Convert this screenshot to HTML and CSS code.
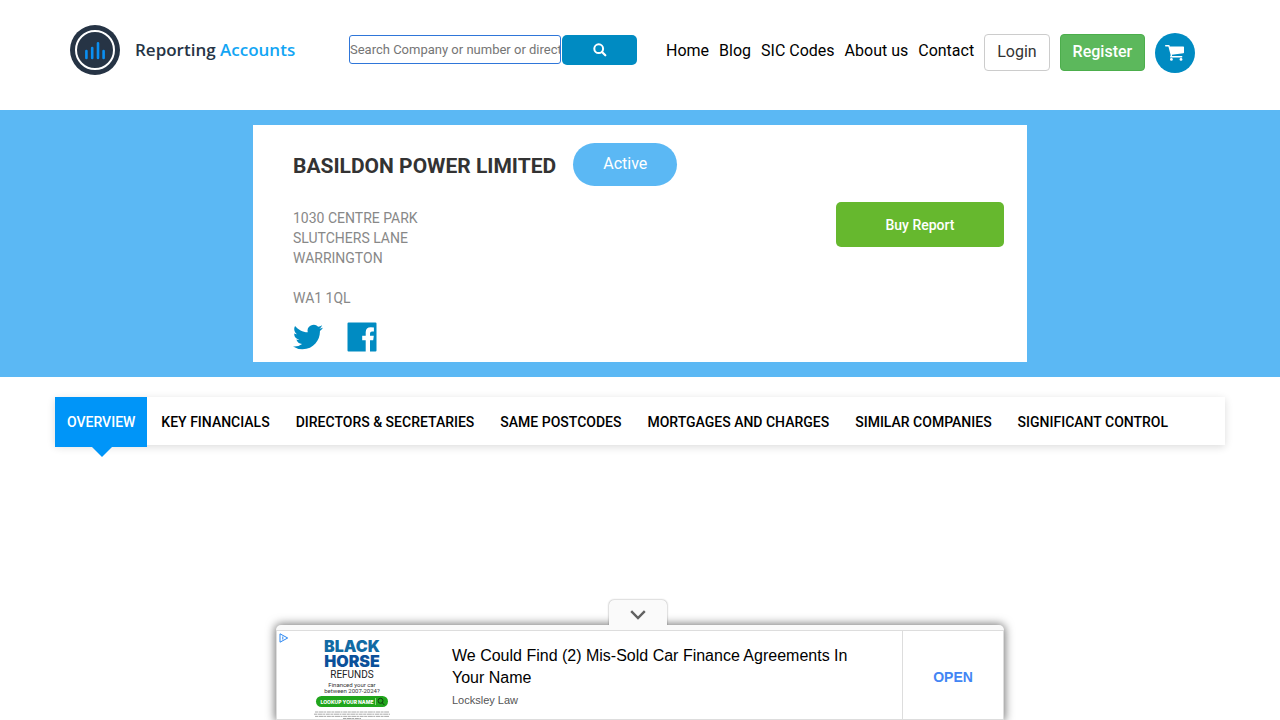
FILE: index.html
```html
<!DOCTYPE html>
<html lang="en">
<head>
  <meta charset="UTF-8">
  <meta name="viewport" content="width=device-width, initial-scale=1.0">
  <title>BASILDON POWER LIMITED - Reporting Accounts</title>
  <link rel="stylesheet" href="styles.css">
</head>
<body>
  <!-- header -->
  <header class="container header">
    <a class="logo" href="#">
      <svg width="50" height="50" viewBox="0 0 50 50" aria-hidden="true">
        <circle cx="25" cy="25" r="25" fill="#263445"/>
        <circle cx="25" cy="25" r="19" fill="none" stroke="#fff" stroke-width="2"/>
        <g stroke="#0a8ff2" stroke-width="2.6" stroke-linecap="round">
          <path d="M16.4 26v7M22.2 23v10M28 18.300v14.700M33.600 26v7"/>
        </g>
      </svg>
      <span class="logo-text">Reporting <span class="logo-blue">Accounts</span></span>
    </a>

    <form class="search" action="#">
      <input type="text" class="search-input" aria-label="Search" placeholder="Search Company or number or director">
      <button type="submit" class="search-btn" aria-label="Search">
        <svg width="14" height="14" viewBox="0 0 14 14" fill="none" stroke="#fff" aria-hidden="true">
          <circle cx="5.700" cy="5.700" r="4.400" stroke-width="2"/>
          <path d="M9 9l3.300 3.300" stroke-width="2.200" stroke-linecap="round"/>
        </svg>
      </button>
    </form>

    <nav class="menu">
      <a href="#" class="menu-link">Home</a>
      <a href="#" class="menu-link">Blog</a>
      <a href="#" class="menu-link">SIC Codes</a>
      <a href="#" class="menu-link">About us</a>
      <a href="#" class="menu-link">Contact</a>
      <a href="#" class="btn btn-login">Login</a>
      <a href="#" class="btn btn-register">Register</a>
      <a href="#" class="cart" aria-label="Cart">
        <svg width="20" height="18" viewBox="0 0 20 18" fill="#fff" aria-hidden="true">
          <path d="M.7 1h3.300q.6 0 .8 1.400H18.300q.7 0 .7.700v5.500q0 .6-.7.700L6.900 10.700q.3.700 0 1.400h9.800q.7 0 .7.700t-.7.700H5.700q-1-.1-.6-1.100l.6-1.200L3.400 2.400H.7Q0 2.300 0 1.700T.7 1z"/>
          <circle cx="6.400" cy="15.400" r="1.400"/>
          <circle cx="16" cy="15.400" r="1.400"/>
        </svg>
      </a>
    </nav>
  </header>

  <!-- company -->
  <section class="banner">
    <div class="company">
      <div class="company-head">
        <h1>BASILDON POWER LIMITED</h1>
        <span class="status">Active</span>
      </div>
      <div class="company-body">
        <address>
          1030 CENTRE PARK<br>
          SLUTCHERS LANE<br>
          WARRINGTON<br><br>
          WA1 1QL
        </address>
        <button type="button" class="buy">Buy Report</button>
      </div>
      <div class="social">
        <a href="#" aria-label="Twitter">
          <svg width="30" height="30" viewBox="0 0 24 24" fill="#008bc2" aria-hidden="true">
            <path d="M23.950 4.570a10 10 0 0 1-2.820.775 4.960 4.960 0 0 0 2.160-2.723c-.950.555-2.005.959-3.127 1.184a4.920 4.920 0 0 0-8.384 4.482C7.690 8.095 4.067 6.130 1.640 3.162a4.820 4.820 0 0 0-.666 2.475c0 1.710.870 3.213 2.188 4.096a4.900 4.900 0 0 1-2.228-.616v.060a4.920 4.920 0 0 0 3.946 4.827 5 5 0 0 1-2.212.085 4.940 4.940 0 0 0 4.604 3.417 9.870 9.870 0 0 1-6.102 2.105c-.390 0-.779-.023-1.170-.067a14 14 0 0 0 7.557 2.209c9.053 0 13.998-7.496 13.998-13.985 0-.210 0-.420-.015-.630a9.940 9.940 0 0 0 2.460-2.548z"/>
          </svg>
        </a>
        <a href="#" aria-label="Facebook">
          <svg width="30" height="30" viewBox="0 0 30 30" fill="#008bc2" aria-hidden="true">
            <path d="M1.500.5h27q1 0 1 1v27q0 1-1 1h-5.500V18.200h3.200l.6-4.400h-3.800v-2.300q0-2 2-2h1.900V5.400q-1-.2-3-.2-5.200 0-5.200 5.100v3.500H15.200v4.400h3.500v11.300H1.500q-1 0-1-1v-27q0-1 1-1z"/>
          </svg>
        </a>
      </div>
    </div>
  </section>

  <!-- tabs -->
  <nav class="container tabs">
    <a href="#" class="active">OVERVIEW</a>
    <a href="#">KEY FINANCIALS</a>
    <a href="#">DIRECTORS &amp; SECRETARIES</a>
    <a href="#">SAME POSTCODES</a>
    <a href="#">MORTGAGES AND CHARGES</a>
    <a href="#">SIMILAR COMPANIES</a>
    <a href="#">SIGNIFICANT CONTROL</a>
  </nav>

  <!-- bottom ad -->
  <aside class="anchor">
    <button type="button" class="anchor-toggle" aria-label="Hide ad">
      <svg width="16" height="10" viewBox="0 0 16 10" fill="none" stroke="#616161" stroke-width="2.400" aria-hidden="true">
        <path d="M1.200 1.200L8 8l6.800-6.800"/>
      </svg>
    </button>
    <div class="ad">
      <div class="ad-picture">
        <svg class="ad-choices" width="10" height="10" viewBox="0 0 10 10" fill="none" stroke="#2a86f0" aria-hidden="true">
          <path d="M1 .800v8.400L8.700 5z"/>
          <path d="M3.800 3.500v3"/>
        </svg>
        <div class="creative">
          <strong class="horse horse-top">BLACK</strong>
          <strong class="horse">HORSE</strong>
          <span class="refunds">REFUNDS</span>
          <span class="car">Financed your car<br>between 2007-2024?</span>
          <span class="lookup">LOOKUP YOUR NAME
            <svg width="11" height="9" viewBox="0 0 11 9" fill="none" stroke="#123c10" aria-hidden="true">
              <path d="M1.500 1v7" stroke="#8fd685"/>
              <circle cx="6.500" cy="3.800" r="2.500"/>
              <path d="M8.300 5.800l2.200 2.400"/>
            </svg>
          </span>
          <svg class="small-print" width="76" height="8" viewBox="0 0 76 8" fill="none" stroke="#aaa" stroke-dasharray="3 .6 5 .5 2 .7 4 .6" aria-hidden="true">
            <path d="M1 1h74M0 3.200h76M1 5.400h74M29 7.500h18"/>
          </svg>
        </div>
      </div>
      <a href="#" class="ad-text">
        <span class="ad-title">We Could Find (2) Mis-Sold Car Finance Agreements In Your Name</span>
        <span class="ad-by">Locksley Law</span>
      </a>
      <a href="#" class="ad-open">OPEN</a>
    </div>
  </aside>
</body>
</html>
```
FILE: styles.css
```css
* {
  box-sizing: border-box;
}
body {
  margin: 0;
  min-height: 100vh;
  background-color: #fff;
  color: #333;
  font-family: Roboto, "Liberation Sans", sans-serif;
  font-size: 14px;
  line-height: 20px;
}
a {
  color: #000;
  text-decoration: none;
}
button {
  font-family: inherit;
  border: 0;
  cursor: pointer;
}
svg {
  display: block;
}
.container {
  max-width: 1170px;
  margin: 0 auto;
}

/* header */
.header {
  display: flex;
  align-items: flex-start;
  padding: 25px 15px;
  height: 110px;
}
.logo {
  display: flex;
  align-items: center;
  gap: 15px;
  width: 279px;
}
.logo-text {
  font-family: "Open Sans", sans-serif;
  font-size: 17px;
  font-weight: 600;
  color: #263445;
}
.logo-blue {
  color: #12a5f4;
}
.search {
  display: flex;
  gap: 1px;
  margin-top: 10px;
}
.search-input {
  width: 212px;
  height: 29px;
  padding: 0;
  border: 1px solid #2f76d9;
  border-radius: 3px;
  font-family: inherit;
  font-size: 13px;
}
.search-input::placeholder {
  color: #757575;
}
.search-btn {
  display: flex;
  align-items: center;
  justify-content: center;
  width: 75px;
  height: 30px;
  border-radius: 5px;
  background-color: #008bc2;
}
.menu {
  display: flex;
  align-items: flex-start;
  gap: 10px;
  margin: 8px 0 0 29px;
  font-size: 16px;
  white-space: nowrap;
}
.menu-link {
  padding-top: 8px;
}
.btn {
  margin-top: 1px;
  padding: 7px 12px 8px;
  border: 1px solid #ccc;
  border-radius: 4px;
  color: #333;
}
.btn-register {
  border-color: #4cae4c;
  background-color: #5cb85c;
  color: #fff;
  font-weight: 500;
}
.cart {
  display: flex;
  align-items: center;
  justify-content: center;
  width: 40px;
  height: 40px;
  border-radius: 50%;
  background-color: #008bc2;
}

/* company */
.banner {
  padding: 15px;
  background-color: #5bb8f4;
}
.company {
  max-width: 774px;
  margin: 0 auto;
  padding: 18px 23px 10px 40px;
  background-color: #fff;
}
.company-head {
  display: flex;
  align-items: center;
  gap: 17px;
}
h1 {
  margin: 3px 0 0;
  font-size: 21px;
  font-weight: 700;
}
.status {
  padding: 11px 30px 12px;
  border-radius: 22px;
  background-color: #5bb8f4;
  color: #fff;
  font-size: 16px;
}
.company-body {
  display: flex;
  justify-content: space-between;
  align-items: flex-start;
  margin-top: 16px;
}
address {
  padding-top: 6px;
  color: #888;
  font-style: normal;
}
.buy {
  width: 168px;
  height: 45px;
  border-radius: 5px;
  background-color: #66b82e;
  color: #fff;
  font-size: 14px;
  font-weight: 500;
}
.social {
  display: flex;
  gap: 24px;
  margin-top: 14px;
}

/* tabs */
.tabs {
  display: flex;
  gap: 2px;
  height: 48px;
  margin-top: 20px;
  box-shadow: 0 2px 8px rgba(0, 0, 0, 0.14);
  font-weight: 500;
  white-space: nowrap;
}
.tabs a {
  height: 50px;
  padding: 15px 12px;
}
.tabs .active {
  position: relative;
  background-color: #0095f8;
  color: #fff;
}
.tabs .active::after {
  content: "";
  position: absolute;
  top: 100%;
  left: 50%;
  margin-left: -9px;
  border: 10px solid transparent;
  border-top-color: #0095f8;
  border-bottom: 0;
}

/* bottom ad */
.anchor {
  position: fixed;
  right: 0;
  bottom: 0;
  left: 0;
  max-width: 728px;
  margin: 0 auto;
  padding-top: 5px;
  border-radius: 5px 5px 0 0;
  background-color: #fafafa;
  box-shadow: 0 0 10px 1px rgba(0, 0, 0, 0.55);
  font-family: "Liberation Sans", Arial, sans-serif;
}
.anchor-toggle {
  position: absolute;
  bottom: 100%;
  left: 333px;
  display: flex;
  align-items: center;
  justify-content: center;
  width: 58px;
  height: 25px;
  padding: 4px 0 0;
  border-radius: 5px 5px 0 0;
  background-color: #fafafa;
  box-shadow: 0 0 2px rgba(0, 0, 0, 0.45);
  clip-path: inset(-3px -3px 0);
}
.ad {
  display: flex;
  height: 90px;
  border: 1px solid #ddd;
  background-color: #fff;
}
.ad-picture {
  position: relative;
  flex: 0 0 150px;
}
.ad-choices {
  position: absolute;
  top: 2px;
  left: 2px;
}
.creative {
  display: flex;
  flex-direction: column;
  align-items: center;
  padding-top: 8px;
}
.horse {
  color: #0b519a;
  font-family: Inter, sans-serif;
  font-size: 16px;
  font-weight: 900;
  line-height: 15px;
}
.horse-top {
  color: #126ba4;
}
.refunds {
  color: #222;
  font-family: Roboto, sans-serif;
  font-size: 10px;
  line-height: 12px;
}
.car {
  margin-top: 1px;
  color: #333;
  font-family: Roboto, sans-serif;
  font-size: 6px;
  line-height: 6px;
  text-align: center;
}
.lookup {
  display: flex;
  align-items: center;
  gap: 1px;
  height: 11px;
  margin: 2px 0 4px;
  padding: 0 3px 0 5px;
  border-radius: 6px;
  background-color: #20a51c;
  color: #fff;
  font-family: Inter, sans-serif;
  font-size: 5px;
  font-weight: 800;
  white-space: nowrap;
}
.ad-text {
  flex: 1;
  padding: 14px 50px 0 25px;
}
.ad-title {
  display: block;
  font-size: 16px;
  line-height: 22px;
}
.ad-by {
  display: block;
  color: #555;
  font-size: 11px;
  line-height: 22px;
}
.ad-open {
  display: flex;
  align-items: center;
  justify-content: center;
  width: 101px;
  padding-top: 4px;
  border-left: 1px solid #ddd;
  color: #4285f4;
  font-size: 14px;
  font-weight: 700;
}
```
